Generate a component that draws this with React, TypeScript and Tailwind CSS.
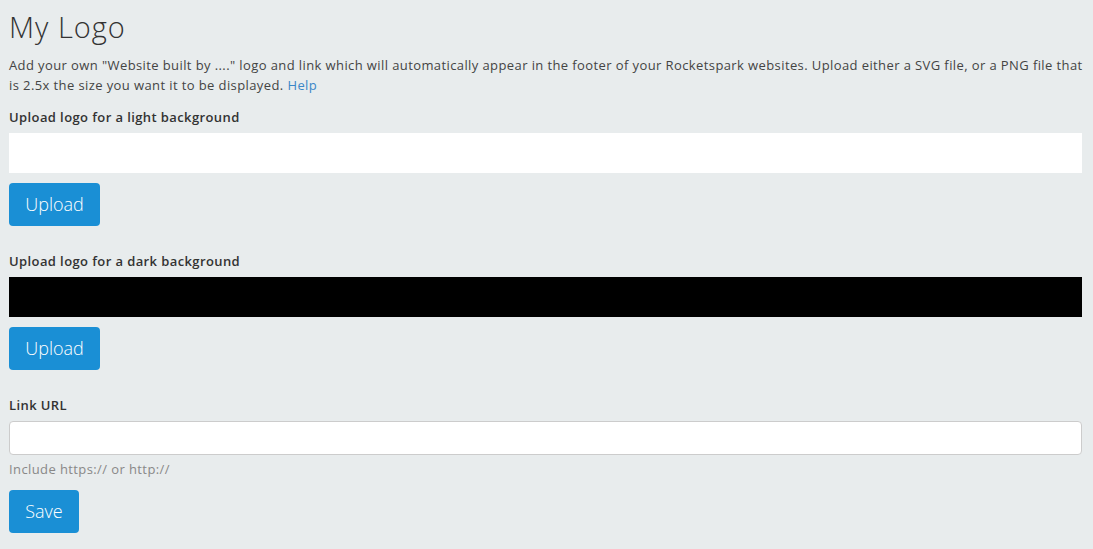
export default function App() {
  return (
    <div className="min-h-[549px] bg-[#e8eced] px-[9px] pt-[9px] font-['Open_Sans',sans-serif] text-[#333]">
      <h1 className="text-[29px] font-light leading-[36px] tracking-[1px] text-[#333]">My Logo</h1>
      <p className="mt-[10px] text-[13px] leading-[20px] tracking-[0.4px] text-[#444]">
        Add your own "Website built by ...." logo and link which will automatically appear in the footer of your
        Rocketspark websites. Upload either a SVG file, or a PNG file that is 2.5x the size you want it to be
        displayed. <a className="text-[#3a87c8]">Help</a>
      </p>

      <div className="mt-[13px] text-[13px] font-semibold leading-[18px] tracking-[0.4px]">
        Upload logo for a light background
      </div>
      <div className="mt-[7px] h-[40px] w-[1073px] bg-white" />
      <button className="mt-[10px] block h-[43px] w-[91px] rounded-[4px] bg-[#1a8fd5] text-[18px] font-light text-white">
        Upload
      </button>

      <div className="mt-[26px] text-[13px] font-semibold leading-[18px] tracking-[0.4px]">
        Upload logo for a dark background
      </div>
      <div className="mt-[7px] h-[40px] w-[1073px] bg-black" />
      <button className="mt-[10px] block h-[43px] w-[91px] rounded-[4px] bg-[#1a8fd5] text-[18px] font-light text-white">
        Upload
      </button>

      <div className="mt-[26px] text-[13px] font-semibold leading-[18px] tracking-[0.4px]">Link URL</div>
      <input className="mt-[7px] block h-[34px] w-[1073px] rounded-[4px] border border-[#ccc] bg-white" />
      <div className="mt-[5px] text-[13px] leading-[18px] tracking-[0.4px] text-[#888]">Include https:// or http://</div>
      <button className="mt-[12px] block h-[43px] w-[70px] rounded-[4px] bg-[#1a8fd5] text-[18px] font-light text-white">
        Save
      </button>
    </div>
  );
}
